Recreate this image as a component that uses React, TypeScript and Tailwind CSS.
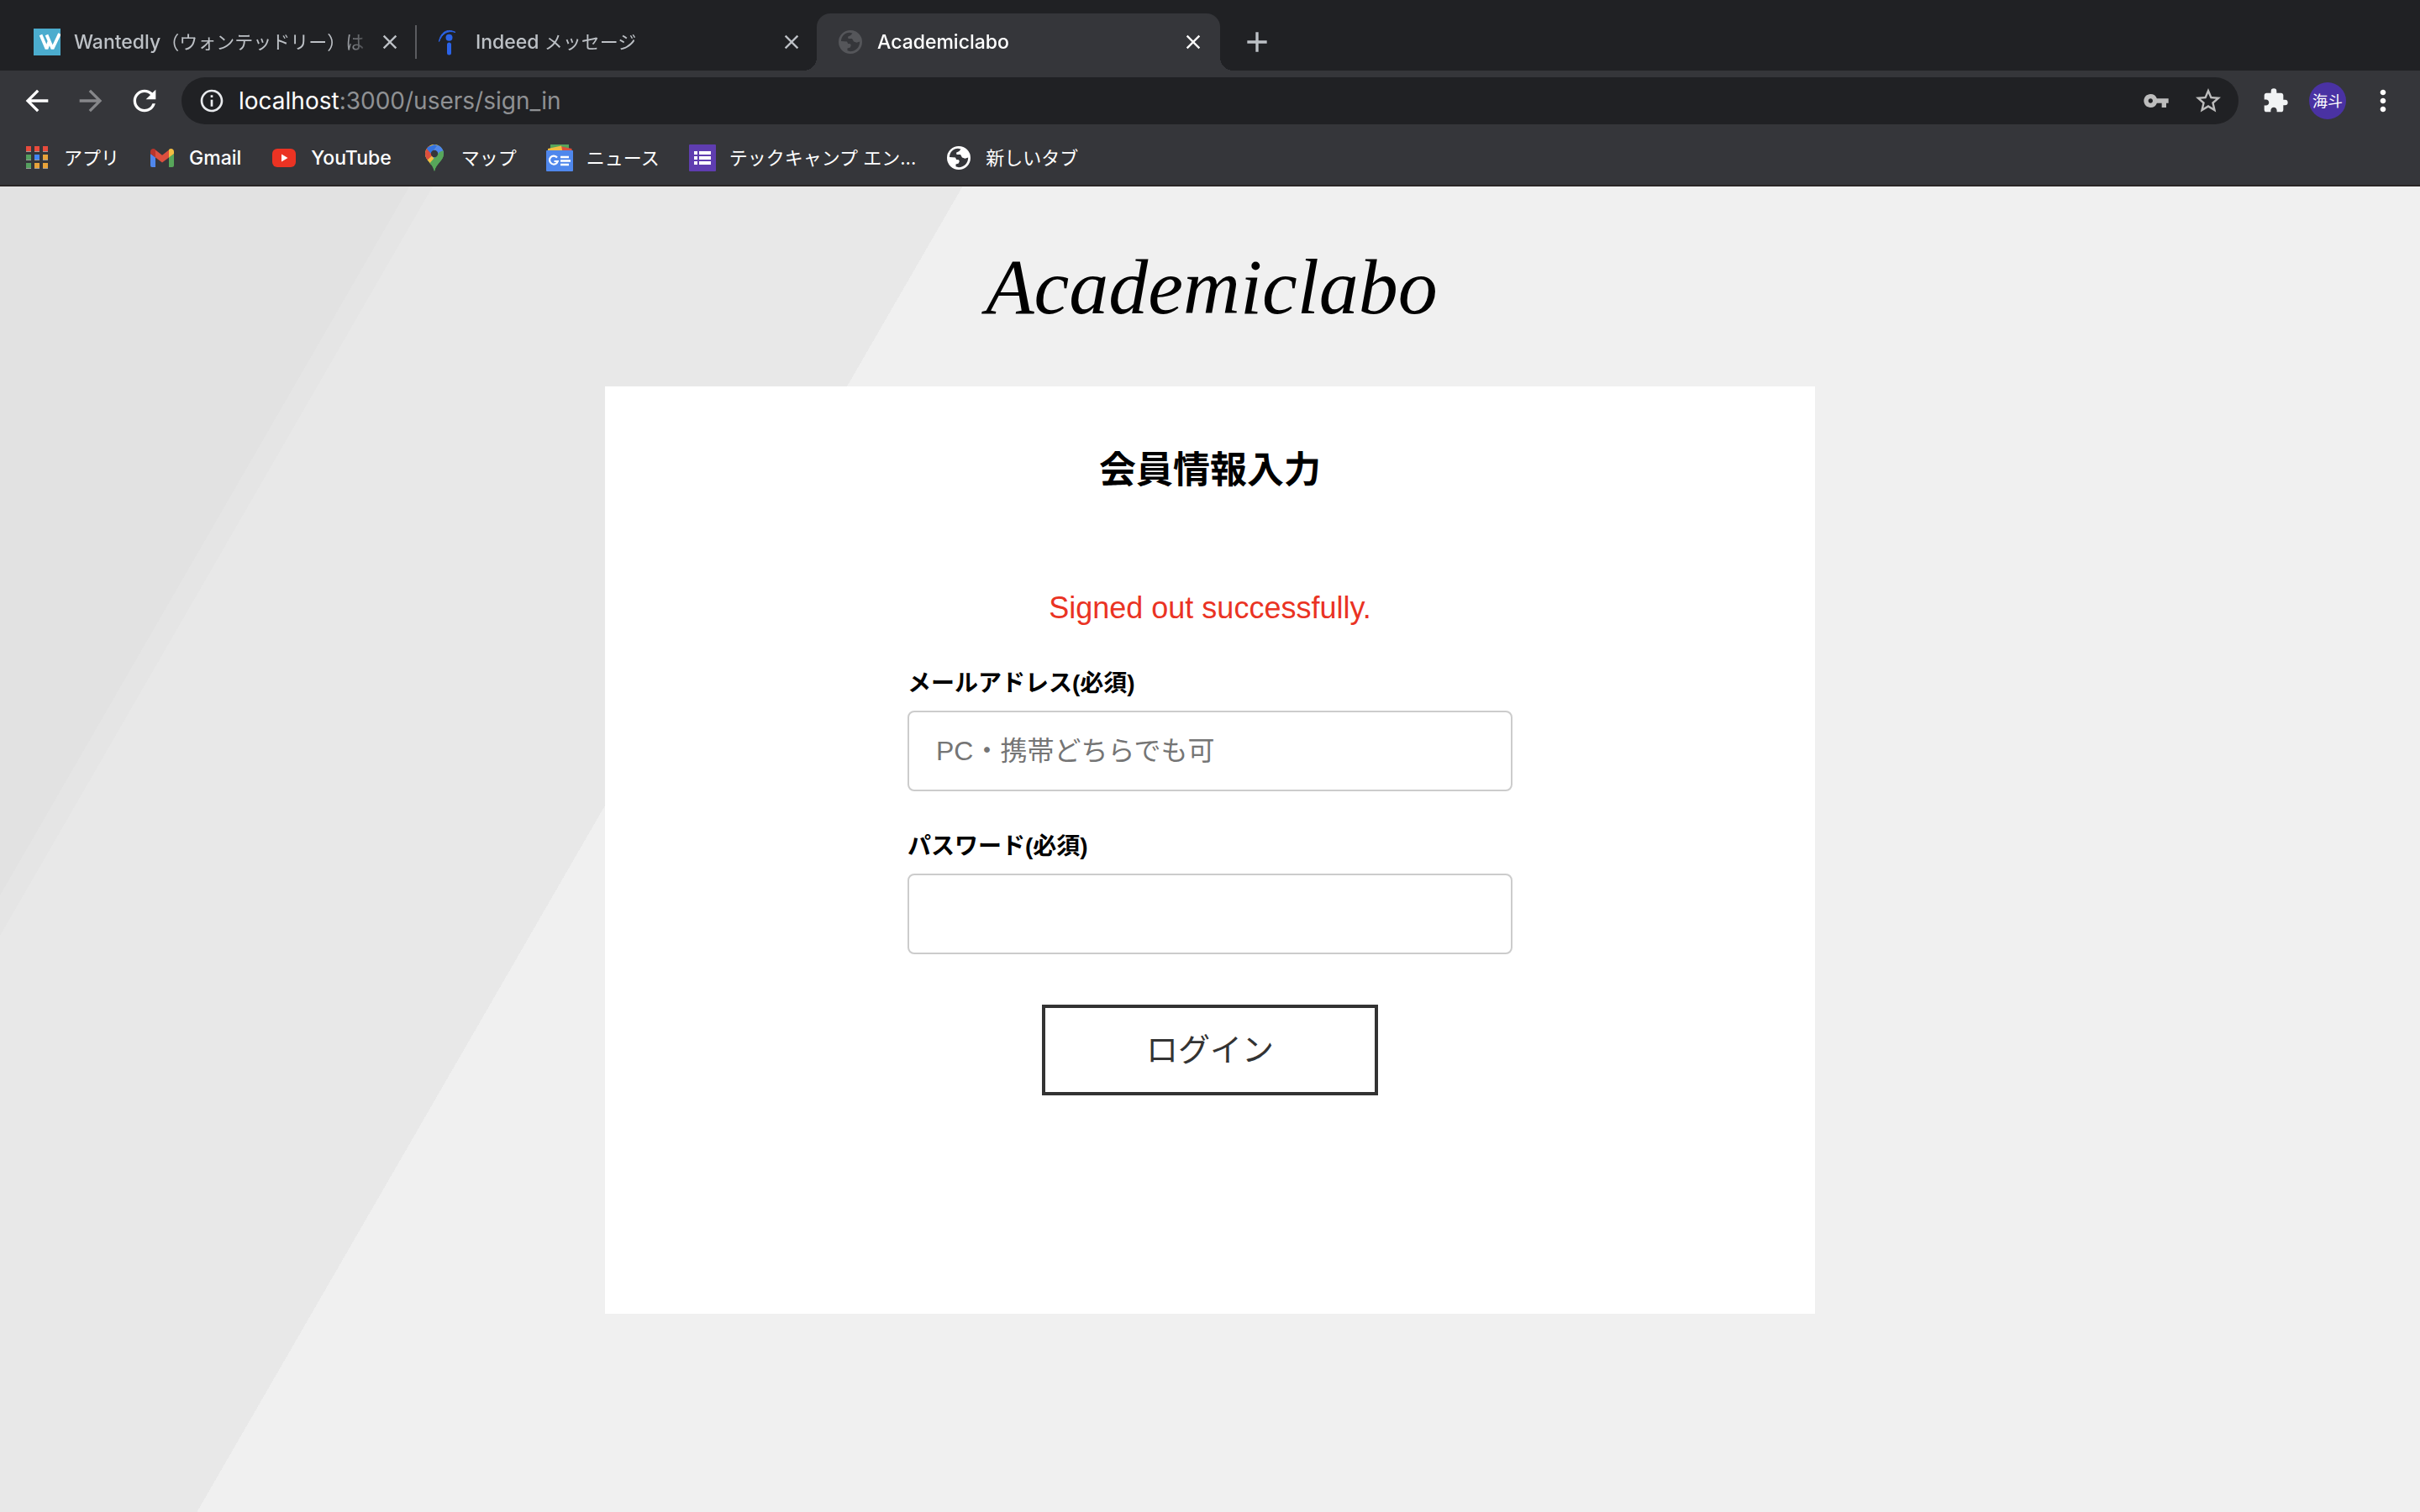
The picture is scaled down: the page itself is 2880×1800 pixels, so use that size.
import { useState, type ReactNode } from "react";
import {
  MdAdd,
  MdArrowBack,
  MdArrowForward,
  MdClose,
  MdExtension,
  MdInfoOutline,
  MdMoreVert,
  MdRefresh,
  MdStarBorder,
  MdVpnKey,
} from "react-icons/md";

function GlobeIcon({ className }: { className: string }) {
  return (
    <svg viewBox="0 0 28 28" className={className} aria-hidden="true">
      <path
        fill="currentColor"
        fillRule="evenodd"
        d="M14 0a14 14 0 1 0 0 28a14 14 0 0 0 0-28ZM3 13C3 7 7.500 2.800 13 2.700L16.500 3.500L14.500 6L11 7.800L11.500 10H16L18 13.500L21.500 14.800L25.200 13.500C25.200 20.500 20 25.200 14 25.200L10.500 24.200L10.500 21.500L13.800 20.500L14.800 18L14 16.200L11.200 16L10 13.500Z"
      />
    </svg>
  );
}

function WantedlyIcon() {
  return (
    <svg viewBox="0 0 32 32" className="size-8 shrink-0" aria-hidden="true">
      <rect width="32" height="32" fill="#4bacce" />
      <path d="M8.500 7.500L15.500 24L19 14M15.500 7.500L22.500 24L31 6" fill="none" stroke="#fff" strokeWidth="3.800" strokeLinejoin="bevel" />
    </svg>
  );
}

function IndeedIcon() {
  return (
    <svg viewBox="0 0 32 32" className="size-8 shrink-0" aria-hidden="true">
      <path d="M4.500 15.500C6 5 14-1 24 4.500C15 1.500 8 6 4.500 15.500Z" fill="#2b63e8" stroke="#2b63e8" strokeWidth="1" strokeLinejoin="round" />
      <circle cx="16.500" cy="10.700" r="4" fill="#2b63e8" />
      <rect x="14" y="16.500" width="5" height="15" rx="2.500" fill="#2b63e8" />
    </svg>
  );
}

function AppsIcon() {
  const cells = ["#e84b3c", "#e84b3c", "#e84b3c", "#55a05f", "#4285f4", "#e8a33a", "#55a05f", "#e8a33a", "#e8a33a"];
  return (
    <svg viewBox="0 0 32 32" className="size-8 shrink-0" aria-hidden="true">
      {cells.map((color, i) => (
        <g key={i}>
          <rect x={3 + (i % 3) * 10} y={2 + Math.floor(i / 3) * 10} width="6" height="7" fill="#9b9b9b" />
          <rect x={3 + (i % 3) * 10} y={2 + Math.floor(i / 3) * 10} width="6" height="6" fill={color} />
        </g>
      ))}
    </svg>
  );
}

function GmailIcon() {
  return (
    <svg viewBox="0 0 32 32" className="size-8 shrink-0" aria-hidden="true">
      <path d="M2 11l6 4v12H4a2 2 0 0 1-2-2Z" fill="#4f87ec" />
      <path d="M30 11l-6 4v12h4a2 2 0 0 0 2-2Z" fill="#57a65a" />
      <path d="M8 6.500l8 6.200 8-6.200v9L16 21.500 8 15.500Z" fill="#dc4f3e" />
      <path d="M2 8.500C2 5.300 5.500 4 8 6v9.500L2 11Z" fill="#b9352c" />
      <path d="M30 8.500C30 5.300 26.500 4 24 6v9.500l6-4.500Z" fill="#f3bd42" />
    </svg>
  );
}

function YouTubeIcon() {
  return (
    <svg viewBox="0 0 32 32" className="size-8 shrink-0" aria-hidden="true">
      <rect x="2" y="5" width="28" height="22" rx="6" fill="#eb3323" />
      <path d="M13 11.500l7.500 4.500-7.500 4.500Z" fill="#fff" />
    </svg>
  );
}

function MapsIcon() {
  return (
    <svg viewBox="0 0 32 32" className="size-8 shrink-0" aria-hidden="true">
      <clipPath id="map-pin">
        <path d="M16 0C9.800 0 5 5 5 11c0 8.500 9 11 11 21 2-10 11-12.500 11-21C27 5 22.200 0 16 0Z" />
      </clipPath>
      <g clipPath="url(#map-pin)">
        <rect width="32" height="32" fill="#57a65a" />
        <path d="M0 0h22L8 18 0 26Z" fill="#f3bd42" />
        <path d="M0 0h10L16 11 7 20 0 14Z" fill="#dc4f3e" />
        <path d="M6 20l10-9 8-4-14 20Z" fill="#f3bd42" />
        <path d="M6 4L16 0l4 1-8 10Z" fill="#3474e0" />
        <path d="M20 1l12-1v8L16 18 12 11Z" fill="#4f87ec" />
        <path d="M27 7v25H14l-6-7 14-16Z" fill="#57a65a" />
      </g>
      <circle cx="16" cy="11" r="4.200" fill="#35363a" />
    </svg>
  );
}

function NewsIcon() {
  return (
    <svg viewBox="0 0 32 32" className="size-8 shrink-0" aria-hidden="true">
      <path d="M5 0h22v8H5Z" fill="#57a65a" />
      <path d="M16 2l14.500 3v4H16Z" fill="#dc4f3e" />
      <path d="M2 5l16-3.500L19.500 9H2Z" fill="#f3bd42" />
      <rect y="7" width="32" height="25" rx="1" fill="#4f87ec" />
      <path d="M13 15.500a5 5 0 1 0 .8 4.500H9.500" fill="none" stroke="#fff" strokeWidth="2.200" />
      <path d="M17 15h10M17 19.500h12M17 24h10" stroke="#fff" strokeWidth="2.600" />
    </svg>
  );
}

function FormsIcon() {
  return (
    <svg viewBox="0 0 32 32" className="size-8 shrink-0" aria-hidden="true">
      <rect width="32" height="32" rx="1" fill="#5f3db0" />
      <path d="M6 10h4M6 16h4M6 22h4M12 10h14M12 16h14M12 22h14" stroke="#fff" strokeWidth="4" />
    </svg>
  );
}

function Tab({ icon, title, active, divider }: { icon: ReactNode; title: ReactNode; active?: boolean; divider?: boolean }) {
  return (
    <div
      className={
        active
          ? "relative flex h-[68px] w-[480px] items-center gap-2 rounded-t-2xl bg-[#35363a] pl-6 pr-[18px] text-white before:absolute before:bottom-0 before:-left-4 before:size-4 before:bg-[radial-gradient(circle_at_0_0,#202124_16px,#35363a_16px)] after:absolute after:bottom-0 after:-right-4 after:size-4 after:bg-[radial-gradient(circle_at_100%_0,#202124_16px,#35363a_16px)]"
          : "-mr-[2px] flex h-[68px] w-[480px] items-center gap-2 pl-6 text-[#bdc1c6]"
      }
    >
      {icon}
      <span className="ml-2 min-w-0 flex-1 overflow-hidden whitespace-nowrap mask-r-from-90% mask-r-to-100%">{title}</span>
      <button type="button" aria-label="タブを閉じる" className="shrink-0">
        <MdClose className="size-7" />
      </button>
      {!active && <span className={divider ? "ml-2 h-10 w-[2px] bg-[#5b5c60]" : "ml-2 w-[2px]"} />}
    </div>
  );
}

function Bookmark({ icon, label, latin }: { icon: ReactNode; label: string; latin?: boolean }) {
  return (
    <a href="#" className={latin ? "flex items-center gap-4 text-[23px] font-medium" : "flex items-center gap-4 text-[22px]"}>
      <span className="flex w-8 justify-center">{icon}</span>
      {label}
    </a>
  );
}

function BrowserChrome() {
  return (
    <header className="bg-[#35363a] font-[Inter,'Noto_Sans_CJK_JP',sans-serif] text-white">
      <div className="flex h-[84px] items-end bg-[#202124] pl-4 text-[22px]">
        <Tab
          icon={<WantedlyIcon />}
          title={
            <>
              <span className="text-[23px] font-medium">Wantedly</span>（ウォンテッドリー）は
            </>
          }
          divider
        />
        <Tab
          icon={<IndeedIcon />}
          title={
            <>
              <span className="text-[23px] font-medium">Indeed</span> メッセージ
            </>
          }
        />
        <Tab
          icon={<span className="flex w-8 justify-center text-[#55565a]"><GlobeIcon className="size-7" /></span>}
          title={<span className="text-[23px] font-medium">Academiclabo</span>}
          active
        />
        <button type="button" aria-label="新しいタブ" className="ml-6 flex h-[68px] items-center text-[#bdc1c6]">
          <MdAdd className="size-10" />
        </button>
      </div>

      <div className="flex h-[72px] items-center gap-6 pl-6 pr-6">
        <button type="button" aria-label="戻る"><MdArrowBack className="size-10" /></button>
        <button type="button" aria-label="進む" className="text-[#86878a]"><MdArrowForward className="size-10" /></button>
        <button type="button" aria-label="再読み込み"><MdRefresh className="size-10" /></button>
        <div className="mr-1 flex h-14 flex-1 items-center rounded-full bg-[#202124] pl-5 pr-[18px]">
          <MdInfoOutline className="size-8 text-[#e8eaed]" />
          <span className="ml-4 flex-1 text-[28px] text-[#8f9194]">
            <span className="text-white">localhost</span>:3000/users/sign_in
          </span>
          <span className="flex items-center gap-7 text-[#bdbdbd]">
            <button type="button" aria-label="パスワード"><MdVpnKey className="size-8" /></button>
            <button type="button" aria-label="ブックマーク"><MdStarBorder className="size-9" /></button>
          </span>
        </div>
        <button type="button" aria-label="拡張機能" className="text-[#f1f3f4]"><MdExtension className="size-8" /></button>
        <button type="button" aria-label="プロフィール" className="flex size-11 items-center justify-center rounded-full bg-[#4a32a3] text-[18px]">
          海斗
        </button>
        <button type="button" aria-label="メニュー"><MdMoreVert className="size-10" /></button>
      </div>

      <nav className="flex h-[66px] items-center gap-[35px] border-b-2 border-[#292525] pl-7">
        <Bookmark icon={<AppsIcon />} label="アプリ" />
        <Bookmark icon={<GmailIcon />} label="Gmail" latin />
        <Bookmark icon={<YouTubeIcon />} label="YouTube" latin />
        <Bookmark icon={<MapsIcon />} label="マップ" />
        <Bookmark icon={<NewsIcon />} label="ニュース" />
        <Bookmark icon={<FormsIcon />} label="テックキャンプ エン..." />
        <Bookmark icon={<GlobeIcon className="size-7" />} label="新しいタブ" />
      </nav>
    </header>
  );
}

function SignIn() {
  const [email, setEmail] = useState("");
  const [password, setPassword] = useState("");
  const field = "mt-3 h-24 w-full rounded-lg border-2 border-[#ccc] bg-white px-8 text-[32px] placeholder:text-[#757575]";

  return (
    <main className="flex-1 bg-[linear-gradient(120deg,#e2e2e2_422px,#e5e5e5_422px,#e5e5e5_446px,#e8e8e8_446px,#e8e8e8_992px,#f0f0f0_992px)] pb-[236px] font-['Liberation_Sans','Noto_Sans_CJK_JP',sans-serif] text-black">
      <h1 className="flex h-[238px] items-center justify-center pl-1 font-['Apple_Chancery','Z003','URW_Chancery_L','Liberation_Serif',serif] text-[94px] italic">
        Academiclabo
      </h1>
      <section className="mx-auto h-[1104px] w-1/2 bg-white pt-16">
        <h2 className="text-center text-[44px] leading-[72px] font-bold">会員情報入力</h2>
        <form className="mx-auto w-1/2" onSubmit={(e) => e.preventDefault()}>
          <p className="mt-[98px] text-center text-[36px] leading-[60px] text-[#ea3323]">Signed out successfully.</p>
          <label htmlFor="email" className="mt-10 block text-[28px] leading-10 font-bold">メールアドレス(必須)</label>
          <input id="email" type="email" value={email} onChange={(e) => setEmail(e.target.value)} placeholder="PC・携帯どちらでも可" className={field} />
          <label htmlFor="password" className="mt-[46px] block text-[28px] leading-10 font-bold">パスワード(必須)</label>
          <input id="password" type="password" value={password} onChange={(e) => setPassword(e.target.value)} className={field} />
          <button type="submit" className="mx-auto mt-[60px] block h-[108px] w-[400px] border-4 border-[#333] text-[38px] text-[#333]">
            ログイン
          </button>
        </form>
      </section>
    </main>
  );
}

export default function App() {
  return (
    <div className="flex min-h-screen flex-col">
      <BrowserChrome />
      <SignIn />
    </div>
  );
}
